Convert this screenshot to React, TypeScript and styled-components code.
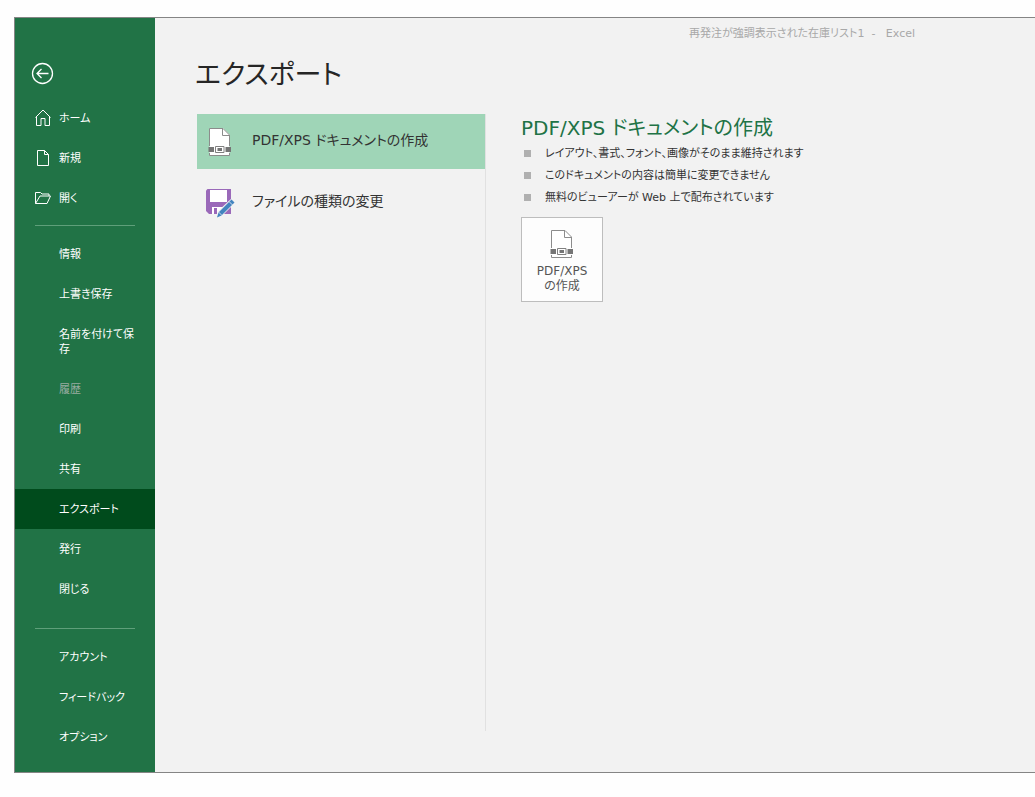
import React from "react";
import styled, { createGlobalStyle } from "styled-components";

const GlobalStyle = createGlobalStyle`
  *, *::before { box-sizing: border-box; }
  body {
    margin: 0;
    background: #fefefe;
    color: #333;
    font-family: "DejaVu Sans", "Noto Sans CJK JP", sans-serif;
    font-size: 11px;
    line-height: 15px;
    font-feature-settings: "palt";
  }
  button { font: inherit; font-feature-settings: inherit; color: inherit; cursor: pointer; }
  h1, h2, ul { margin: 0; padding: 0; font-weight: 400; }
`;

const Window = styled.div`
  display: grid;
  grid-template-columns: 140px 1fr;
  min-height: calc(100vh - 41px);
  margin: 17px 0 24px 14px;
  border: 1px solid #858585;
  border-right: 0;
  background: #f2f2f2;
`;

const Sidebar = styled.nav`
  display: flex;
  flex-direction: column;
  background: #217346;
  color: #fff;
`;

const BackButton = styled.button`
  align-self: flex-start;
  display: flex;
  margin: 44px 0 13px 16px;
  padding: 0;
  border: 0;
  background: none;
`;

const NavItem = styled.button<{ $active?: boolean }>`
  display: flex;
  align-items: center;
  padding: 13px 18px 12px 20px;
  border: 0;
  background: ${(p) => (p.$active ? "#004b1c" : "transparent")};
  text-align: left;

  &:disabled { color: #98aba0; cursor: default; }
`;

const NavIcon = styled.span`
  display: flex;
  flex: 0 0 24px;
  height: 15px;
  align-items: center;
  padding-bottom: 2px;
`;

const Separator = styled.hr<{ $wide?: boolean }>`
  width: 100px;
  height: 1px;
  margin: ${(p) => (p.$wide ? "19px" : "7px")} 20px 8px;
  border: 0;
  background: #5f9f7a;
`;

const Main = styled.main`
  display: flex;
  flex-direction: column;
  min-width: 0;
`;

const TitleBar = styled.header`
  padding: 8px 120px 0 0;
  color: #a8a8a8;
  text-align: right;
  white-space: pre;
`;

const PageTitle = styled.h1`
  padding: 14px 0 0 40px;
  color: #262626;
  font-size: 27px;
  line-height: 40px;
`;

const Columns = styled.div`
  display: grid;
  grid-template-columns: 289px 1fr;
  flex: 1;
  gap: 35px;
  padding: 19px 20px 41px 42px;
`;

const OptionList = styled.div`
  display: flex;
  flex-direction: column;
  gap: 6px;
  border-right: 1px solid #e1e1e1;
`;

const Option = styled.button<{ $selected?: boolean }>`
  display: flex;
  align-items: center;
  height: 55px;
  padding: 0 8px 3px;
  border: 0;
  background: ${(p) => (p.$selected ? "#9fd5b7" : "transparent")};
  font-size: 14px;
  line-height: 20px;
  text-align: left;
`;

const OptionIcon = styled.span`
  display: flex;
  flex: 0 0 47px;
  padding-top: 3px;

  svg { width: 30px; }
`;

const Heading = styled.h2`
  color: #217346;
  font-size: 20px;
  line-height: 28px;
`;

const Bullets = styled.ul`
  display: grid;
  list-style: none;
`;

const Bullet = styled.li`
  display: flex;
  align-items: center;
  gap: 14px;
  height: 22px;
  padding-left: 3px;

  &::before {
    content: "";
    width: 7px;
    height: 7px;
    background: #b0b0b0;
  }
`;

const CreateButton = styled.button`
  display: flex;
  flex-direction: column;
  align-items: center;
  gap: 5px;
  width: 82px;
  height: 85px;
  margin-top: 9px;
  padding: 11px 4px 0;
  border: 1px solid #bdbdbd;
  background: #fdfdfd;
  color: #555;
  font-size: 12px;
`;

function PdfIcon() {
  return (
    <svg width="24" height="30" viewBox="0 0 24 30" fill="none">
      <path d="M1.500 1.500h14l6 6v21h-20z" fill="#fff" />
      <path d="M1.500 19V1.500H15L21.500 8v11M1.500 26v2.500h20V26M14.500 2v6.500H21" stroke="#8c8c8c" />
      <path d="M.5 20h5.500v5H.5zM17.500 20H23v5h-5.500z" fill="#757575" />
      <path d="M7.500 19.500h8.500v6H7.500z" fill="#fff" stroke="#808080" />
      <path d="M9.500 21h4.500v3H9.500z" fill="#757575" />
    </svg>
  );
}

function SaveAsIcon() {
  return (
    <svg width="30" height="30" viewBox="0 0 30 30" fill="none">
      <path d="M1 2.500 2.500 1H26v25H4l-3-3z" fill="#9a69b9" />
      <path d="M5 2h17v12H5zM7 19h12v7H7z" fill="#fff" />
      <path d="M9 20h3v6H9z" fill="#9a69b9" />
      <path d="M11 30l2-7 13-12 4 4-13 13z" fill="#f2f2f2" />
      <path d="M12 29.500l1.500-5L26.500 11.500l3 3-13 13z" fill="#4384bf" />
      <path d="M24 13.500l3.500 3.500M13.500 24l3.500 3.500" stroke="#f2f2f2" strokeWidth=".8" />
    </svg>
  );
}

function BackIcon() {
  return (
    <svg width="23" height="23" viewBox="0 0 23 23" fill="none" stroke="#fff" strokeWidth="1.300">
      <circle cx="11.500" cy="11.500" r="10" />
      <path d="M17.500 11.500H6M10.500 7 6 11.500l4.500 4.500" />
    </svg>
  );
}

const iconPaths = {
  home: "M1.500 7v9.500h4.500V9.500h4v7h4.500V7M.5 8.500 8 1l7.500 7.500",
  file: "M2.500 1.500h7l4 4v11h-11zM9.500 1.500v4h4",
  folder: "M.5 14.500v-11h5L7 5h7v2M.5 14.500h11.500L15.500 7H5z",
};

function LineIcon({ name }: { name: keyof typeof iconPaths }) {
  return (
    <svg width="16" height="18" viewBox="0 0 16 18" fill="none" stroke="#fff">
      <path d={iconPaths[name]} />
    </svg>
  );
}

type Entry = { label: string; icon?: keyof typeof iconPaths; active?: boolean; disabled?: boolean };

const topItems: Entry[] = [
  { label: "ホーム", icon: "home" },
  { label: "新規", icon: "file" },
  { label: "開く", icon: "folder" },
];

const fileItems: Entry[] = [
  { label: "情報" },
  { label: "上書き保存" },
  { label: "名前を付けて保存" },
  { label: "履歴", disabled: true },
  { label: "印刷" },
  { label: "共有" },
  { label: "エクスポート", active: true },
  { label: "発行" },
  { label: "閉じる" },
];

const accountItems: Entry[] = [{ label: "アカウント" }, { label: "フィードバック" }, { label: "オプション" }];

function NavGroup({ items }: { items: Entry[] }) {
  return (
    <>
      {items.map((item) => (
        <NavItem key={item.label} type="button" $active={item.active} disabled={item.disabled}>
          <NavIcon>{item.icon && <LineIcon name={item.icon} />}</NavIcon>
          <span>{item.label}</span>
        </NavItem>
      ))}
    </>
  );
}

export default function App() {
  return (
    <>
      <GlobalStyle />
      <Window lang="ja">
        <Sidebar>
          <BackButton type="button" aria-label="戻る">
            <BackIcon />
          </BackButton>
          <NavGroup items={topItems} />
          <Separator />
          <NavGroup items={fileItems} />
          <Separator $wide />
          <NavGroup items={accountItems} />
        </Sidebar>
        <Main>
          <TitleBar>再発注が強調表示された在庫リスト1{"  -   "}Excel</TitleBar>
          <PageTitle>エクスポート</PageTitle>
          <Columns>
            <OptionList>
              <Option type="button" $selected>
                <OptionIcon><PdfIcon /></OptionIcon>
                PDF/XPS ドキュメントの作成
              </Option>
              <Option type="button">
                <OptionIcon><SaveAsIcon /></OptionIcon>
                ファイルの種類の変更
              </Option>
            </OptionList>
            <section>
              <Heading>PDF/XPS ドキュメントの作成</Heading>
              <Bullets>
                <Bullet>レイアウト、書式、フォント、画像がそのまま維持されます</Bullet>
                <Bullet>このドキュメントの内容は簡単に変更できません</Bullet>
                <Bullet>無料のビューアーが Web 上で配布されています</Bullet>
              </Bullets>
              <CreateButton type="button">
                <PdfIcon />
                <span>PDF/XPS<br />の作成</span>
              </CreateButton>
            </section>
          </Columns>
        </Main>
      </Window>
    </>
  );
}
